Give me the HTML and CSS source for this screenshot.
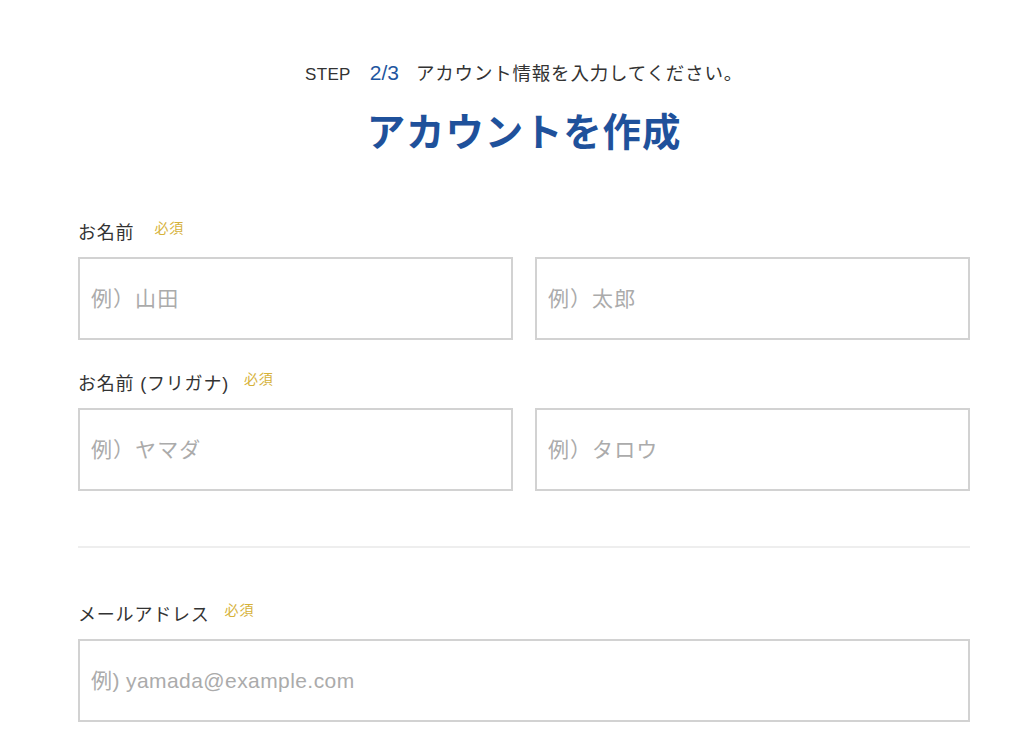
FILE: index.html
```html
<!DOCTYPE html>
<html lang="ja">
<head>
<meta charset="utf-8">
<title>アカウントを作成</title>
<link rel="stylesheet" href="styles.css">
</head>
<body>
<main class="page">
  <p class="step"><span class="step-label">STEP</span><span class="step-num">2/3</span><span class="step-text">アカウント情報を入力してください。</span></p>
  <h1 class="title">アカウントを作成</h1>

  <div class="field field-first">
    <div class="label-row"><span class="label">お名前</span><span class="req">必須</span></div>
    <div class="pair">
      <input class="input" type="text" placeholder="例）山田">
      <input class="input" type="text" placeholder="例）太郎">
    </div>
  </div>

  <div class="field">
    <div class="label-row"><span class="label">お名前 (フリガナ)</span><span class="req req-tight">必須</span></div>
    <div class="pair">
      <input class="input" type="text" placeholder="例）ヤマダ">
      <input class="input" type="text" placeholder="例）タロウ">
    </div>
  </div>

  <hr class="divider">

  <div class="field field-email">
    <div class="label-row"><span class="label">メールアドレス</span><span class="req req-tight">必須</span></div>
    <input class="input input-full input-latin" type="email" placeholder="例) yamada@example.com">
  </div>
</main>
</body>
</html>
```

FILE: styles.css
```css
* { box-sizing: border-box; }

html, body {
  margin: 0;
  padding: 0;
  background: #ffffff;
}

body {
  font-family: "Liberation Sans", "Noto Sans CJK JP", sans-serif;
  color: #333333;
  letter-spacing: 0.05em;
}

.page {
  width: 892px;
  margin-left: 78px;
  padding-top: 61px;
  overflow: hidden;
  height: 730px;
}

.step {
  margin: 0;
  display: flex;
  justify-content: center;
  align-items: baseline;
  height: 24px;
  line-height: 24px;
  font-size: 17px;
  color: #333333;
}

.step-label {
  letter-spacing: 0.02em;
}

.step-num {
  font-size: 21px;
  color: #1f56a0;
  letter-spacing: 0;
  margin-left: 19px;
  margin-right: 17px;
}

.step-text {
  font-size: 18.5px;
}

.title {
  margin: 23px 0 0 0;
  text-align: center;
  font-size: 38.5px;
  line-height: 50px;
  font-weight: 700;
  color: #1f519b;
}

.field-first {
  margin-top: 62px;
}

.field + .field {
  margin-top: 31px;
}

.label-row {
  display: flex;
  align-items: flex-start;
  height: 26px;
}

.label {
  font-size: 18px;
  line-height: 26px;
  color: #333333;
}

.req {
  font-size: 14px;
  line-height: 16px;
  color: #d6b23a;
  margin-left: 20px;
}

.req-tight {
  margin-left: 15px;
}

.pair {
  margin-top: 11px;
  display: grid;
  grid-template-columns: 1fr 1fr;
  column-gap: 22px;
}

.input {
  display: block;
  width: 100%;
  height: 83px;
  border: 2px solid #d2d2d2;
  border-radius: 0;
  background: #ffffff;
  padding: 0 0 0 11px;
  font-family: "Liberation Sans", "Noto Sans CJK JP", sans-serif;
  font-size: 21px;
  letter-spacing: 0.05em;
  color: #333333;
  outline: none;
}

.input-latin {
  letter-spacing: 0.02em;
}

.input::placeholder {
  color: #ababab;
}

.input-full {
  margin-top: 11px;
}

.divider {
  margin: 55px 0 0 0;
  border: 0;
  height: 2px;
  background: #eeeeee;
}

.field-email {
  margin-top: 54px;
}
```
